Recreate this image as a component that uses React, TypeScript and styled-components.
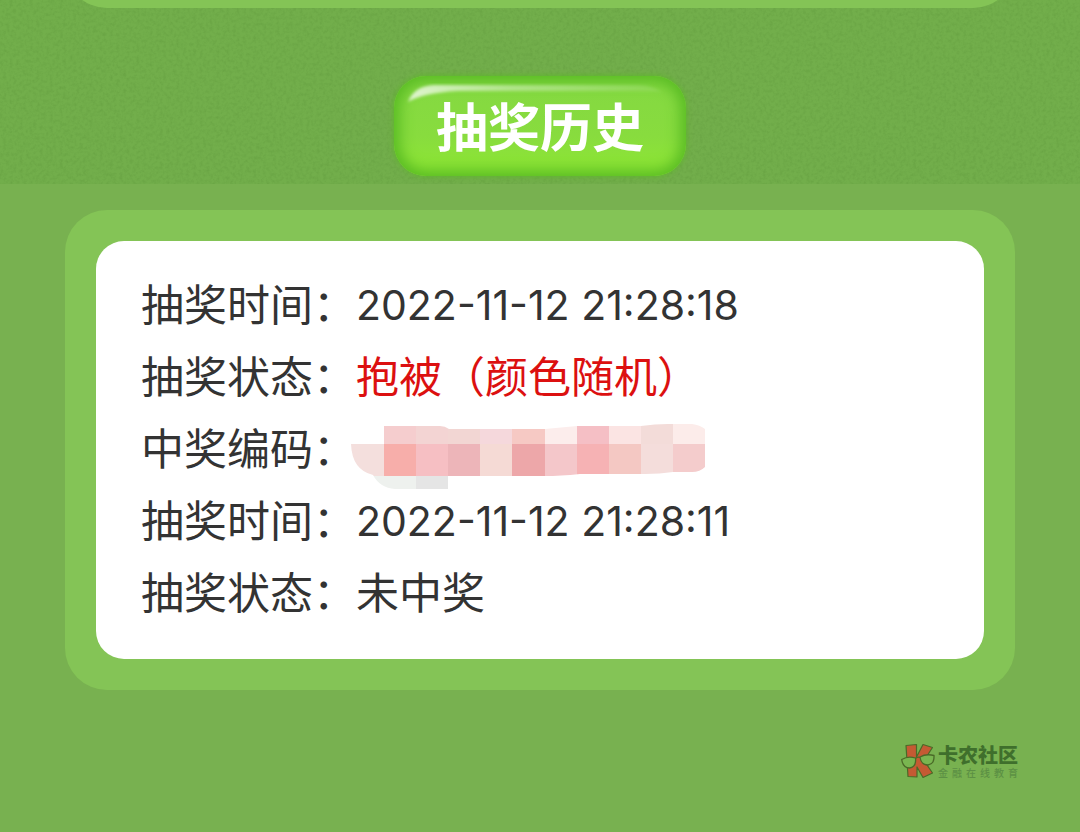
import React from "react";
import styled, { createGlobalStyle } from "styled-components";

const GlobalStyle = createGlobalStyle`
  * { box-sizing: border-box; }
  body {
    margin: 0;
    background: #78b150;
    font-family: "Noto Sans CJK SC", sans-serif;
    color: #333;
  }
`;

const Page = styled.div`
  min-height: 100vh;
  display: flex;
  flex-direction: column;
`;

const Banner = styled.header`
  position: relative;
  display: flex;
  flex-direction: column;
  align-items: center;
  padding: 0 65px 8px;
  background: #72ae4b;
`;

const Grain = styled.svg`
  position: absolute;
  inset: 0;
  width: 100%;
  height: 100%;
`;

const PreviousPanel = styled.div`
  position: relative;
  width: 100%;
  height: 8px;
  overflow: hidden;
  display: flex;
  align-items: flex-end;

  &::before {
    content: "";
    flex: 1 0 auto;
    height: 84px;
    border-radius: 42px;
    background: #84c456;
  }
`;

const Title = styled.h1`
  position: relative;
  margin: 68px 0 0;
  padding: 11px 42px 13px;
  border-radius: 32px;
  background: linear-gradient(#84d842, #88dc3e 60%, #8fe833);
  box-shadow: inset 0 0 14px 6px #5abc24, 0 0 5px 1px #62b531;
  color: #fff;
  font-size: 52px;
  line-height: 76px;
  font-weight: 700;
`;

const Shine = styled.svg`
  position: absolute;
  left: 0;
  top: 0;
  width: 100%;
  height: 40px;
`;

const Panel = styled.main`
  margin: 26px 65px 0;
  padding: 31px;
  border-radius: 42px;
  background: #84c456;
`;

const Records = styled.dl`
  margin: 0;
  padding: 29px 45px;
  border-radius: 28px;
  background: #fff;
`;

const Row = styled.div`
  display: flex;
  height: 72px;
  font-size: 43px;
  line-height: 64px;
`;

const Label = styled.dt`
  flex: none;
`;

const Value = styled.dd<{ $tone?: "win" | "date" }>`
  margin: 0;
  white-space: nowrap;
  color: ${(p) => (p.$tone === "win" ? "#dc1010" : "inherit")};
  ${(p) =>
    p.$tone === "date" &&
    `
    font-family: Inter, "Noto Sans CJK SC", sans-serif;
    font-size: 41px;
    line-height: 70px;
  `}
`;

const Mosaic = styled.svg`
  display: block;
  overflow: visible;
`;

const Brand = styled.footer`
  display: flex;
  align-self: flex-end;
  align-items: center;
  gap: 3px;
  margin: 53px 62px 0 0;
`;

const BrandText = styled.div`
  color: #3f6f2c;
`;

const BrandName = styled.div`
  font-size: 20px;
  line-height: 24px;
  font-weight: 900;
`;

const BrandLine = styled.div`
  color: #5c9044;
  font-size: 10px;
  line-height: 12px;
  font-weight: 500;
  text-align-last: justify;
`;

const xs = [351, 384, 416, 448, 480, 512, 545, 577, 609, 641, 673, 705];
const upper = ["#ffffff", "#f5cdce", "#f3d4d3", "#f2d6d3", "#f5d8dc", "#f6c9c4", "#fcedec", "#f5bfc5", "#fbe4e3", "#f3dcd9", "#fcecea"];
const middle = ["#f4dfdd", "#f7aeaa", "#f6bfc3", "#edb5b9", "#f5dad5", "#eda7a9", "#f4c7ca", "#f6b2b4", "#f4c8c3", "#f4dddb", "#f4cccc"];
const lower = ["#eef1ee", "#eef1ee", "#e5e5e5"];

function Cells({ colors, y, height }: { colors: string[]; y: number; height: number }) {
  return (
    <>
      {colors.map((fill, i) => (
        <rect key={i} x={xs[i]} y={y} width={xs[i + 1] - xs[i]} height={height} fill={fill} />
      ))}
    </>
  );
}

function HiddenCode() {
  return (
    <Mosaic width="350" height="72" viewBox="356 414 350 72" aria-hidden="true" shapeRendering="crispEdges">
      <clipPath id="smudge">
        <path d="M351 444H384V426H440Q445 426 449 429H545L577 426H641Q655 424 668 424H692Q700 425 705 429V467Q700 472 692 472L673 472Q660 474 645 474H580Q560 476 545 476H448V489H395Q380 488 373 475Q352 470 351 444Z" />
      </clipPath>
      <g clipPath="url(#smudge)">
        <Cells colors={upper} y={420} height={24} />
        <Cells colors={middle} y={444} height={32} />
        <Cells colors={lower} y={476} height={14} />
      </g>
    </Mosaic>
  );
}

function BrandMark() {
  return (
    <svg width="34" height="36" viewBox="0 0 34 36" aria-hidden="true">
      <g fill="#c45a33" stroke="#4a6a28" strokeWidth="1.2" strokeLinejoin="round">
        <path d="M5 2.500L15.500 1.500V14L22 1.500L31.500 4.500L23 17.500L31.500 30L22 34.500L16 24V34L7 33.500Z" />
      </g>
      <g fill="#79b650" stroke="#4a6a28" strokeWidth="1.300">
        <path d="M0.700 16.500Q7 12.500 14.500 15Q15.500 24 8.500 25Q2 25 0.700 16.500Z" />
        <path d="M19 14Q25 10.500 33 12.500Q33.500 21 27 22Q20 22 19 14Z" />
        <path d="M14.500 15.500Q16.500 13.500 19 14.500" fill="none" />
      </g>
    </svg>
  );
}

type Item = { label: string; value?: string; tone?: "win" | "date" };

const items: Item[] = [
  { label: "抽奖时间：", value: "2022-11-12 21:28:18", tone: "date" },
  { label: "抽奖状态：", value: "抱被（颜色随机）", tone: "win" },
  { label: "中奖编码：" },
  { label: "抽奖时间：", value: "2022-11-12 21:28:11", tone: "date" },
  { label: "抽奖状态：", value: "未中奖" },
];

export default function App() {
  return (
    <Page lang="zh-CN">
      <GlobalStyle />
      <Banner>
        <Grain aria-hidden="true">
          <filter id="grain" x="0" y="0" width="100%" height="100%" colorInterpolationFilters="sRGB">
            <feTurbulence type="fractalNoise" baseFrequency="0.3" numOctaves="3" seed="4" />
            <feColorMatrix values="0 0 0 0 0.2  0 0 0 0 0.4  0 0 0 0 0.1  1 0 0 0 -0.4" />
          </filter>
          <rect width="100%" height="100%" filter="url(#grain)" opacity="0.25" />
        </Grain>
        <PreviousPanel />
        <Title>
          <Shine viewBox="0 0 292 40" preserveAspectRatio="none" aria-hidden="true">
            <defs>
              <linearGradient id="shine" x1="0" x2="1">
                <stop offset="0" stopColor="#fff" stopOpacity="0.75" />
                <stop offset="0.4" stopColor="#fff" stopOpacity="0.4" />
                <stop offset="1" stopColor="#fff" stopOpacity="0.1" />
              </linearGradient>
              <filter id="soft">
                <feGaussianBlur stdDeviation="1.5" />
              </filter>
            </defs>
            <path d="M14 26Q20 10 40 9H246Q260 10 268 16Q256 15 240 15H64Q28 17 14 26Z" fill="url(#shine)" filter="url(#soft)" />
          </Shine>
          抽奖历史
        </Title>
      </Banner>
      <Panel>
        <Records>
          {items.map((item, i) => (
            <Row key={i}>
              <Label>{item.label}</Label>
              <Value $tone={item.tone}>{item.value ?? <HiddenCode />}</Value>
            </Row>
          ))}
        </Records>
      </Panel>
      <Brand>
        <BrandMark />
        <BrandText>
          <BrandName>卡农社区</BrandName>
          <BrandLine>金融在线教育</BrandLine>
        </BrandText>
      </Brand>
    </Page>
  );
}
